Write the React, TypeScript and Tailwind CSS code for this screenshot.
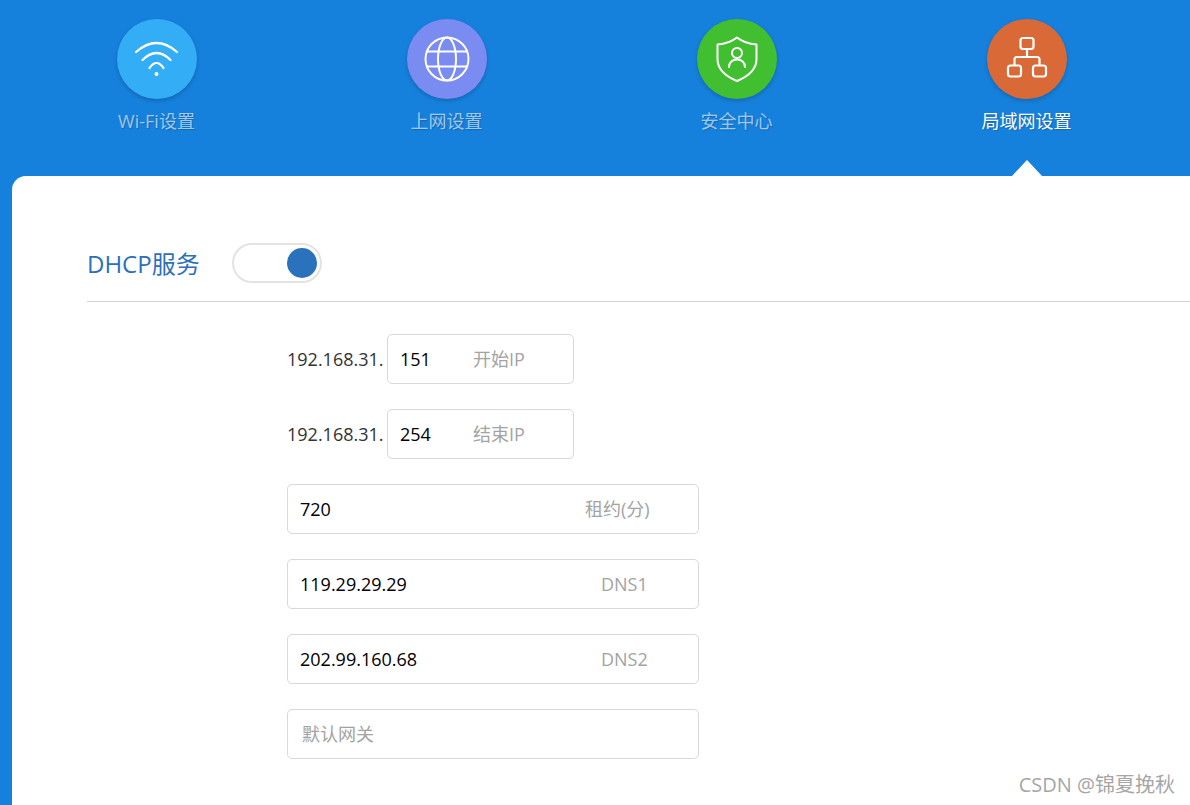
const font = "font-['Open_Sans','Noto_Sans_CJK_SC',sans-serif]";

function WifiIcon() {
  return (
    <svg width="80" height="80" viewBox="0 0 80 80" fill="none" stroke="#fff" strokeWidth="2.2" strokeLinecap="round">
      <path d="M19 33Q39.5 15 60 33" />
      <path d="M25.5 41Q39.5 27 53.5 41" />
      <path d="M32.5 49Q39.5 39 46.5 49" />
      <circle cx="39.5" cy="55" r="2" fill="#fff" stroke="none" />
    </svg>
  );
}

function GlobeIcon() {
  return (
    <svg width="80" height="80" viewBox="0 0 80 80" fill="none" stroke="#fff" strokeWidth="2">
      <circle cx="40" cy="40" r="21.5" />
      <ellipse cx="40" cy="40" rx="9" ry="21.5" />
      <path d="M20 32.5H60M20 47.5H60" />
    </svg>
  );
}

function ShieldIcon() {
  return (
    <svg width="80" height="80" viewBox="0 0 80 80" fill="none" stroke="#fff" strokeWidth="2" strokeLinecap="round" strokeLinejoin="round">
      <path d="M40 18.5C45 22.5 52 25 59.5 25.5V40C59.5 50 51 57.5 40 62C29 57.5 20.5 50 20.5 40V25.5C28 25 35 22.5 40 18.5Z" />
      <circle cx="40" cy="34" r="5" />
      <path d="M32 48C32 43.500 35.500 40.500 40 40.500C44.500 40.500 48 43.500 48 48" />
    </svg>
  );
}

function NetworkIcon() {
  return (
    <svg width="80" height="80" viewBox="0 0 80 80" fill="none" stroke="#fff" strokeWidth="2.2" strokeLinejoin="round">
      <rect x="33.500" y="19" width="13" height="11" rx="2.500" />
      <rect x="21" y="46.500" width="13" height="11" rx="2.500" />
      <rect x="46" y="46.500" width="13" height="11" rx="2.500" />
      <path d="M40 30V38M27.500 46.500V40.500Q27.500 38 30 38H50Q52.500 38 52.500 40.500V46.500" />
    </svg>
  );
}

const navItems = [
  { label: "Wi-Fi设置", circle: "bg-[#33adf5]", icon: <WifiIcon />, active: false },
  { label: "上网设置", circle: "bg-[#7a8bf2]", icon: <GlobeIcon />, active: false },
  { label: "安全中心", circle: "bg-[#41bf31]", icon: <ShieldIcon />, active: false },
  { label: "局域网设置", circle: "bg-[#d96a37]", icon: <NetworkIcon />, active: true },
];

function NavItem({ label, circle, icon, active }: { label: string; circle: string; icon: React.ReactNode; active: boolean }) {
  return (
    <div className="relative flex h-[157px] flex-col items-center">
      <div className={`flex h-20 w-20 items-center justify-center rounded-full shadow-[0_2px_4px_rgba(0,0,0,0.2)] ${circle}`}>{icon}</div>
      <div className={`mt-[9px] text-[18px] leading-[27px] [text-shadow:1px_1px_1px_rgba(0,0,0,0.2)] ${active ? "text-white" : "text-white/60"}`}>
        {label}
      </div>
      {active && (
        <div className="absolute bottom-0 left-1/2 h-0 w-0 -translate-x-1/2 border-x-[15px] border-b-[16px] border-x-transparent border-b-white" />
      )}
    </div>
  );
}

function Field({ value, placeholder, labelClass, wide }: { value?: string; placeholder: string; labelClass?: string; wide?: boolean }) {
  return (
    <div className={`flex h-[50px] items-center rounded-[5px] border border-[#d9d9d9] bg-white text-[18px] ${wide ? "w-[412px]" : "w-[187px]"}`}>
      {value ? (
        <>
          <span className="ml-[12px] text-black">{value}</span>
          <span className={`absolute text-[#a3a3a3] ${labelClass}`}>{placeholder}</span>
        </>
      ) : (
        <span className="ml-[14px] text-[#a3a3a3]">{placeholder}</span>
      )}
    </div>
  );
}

function IpRow({ value, placeholder }: { value: string; placeholder: string }) {
  return (
    <div className="flex items-center">
      <span className="w-[100px] text-[18px] text-[#333]">192.168.31.</span>
      <div className="relative">
        <Field value={value} placeholder={placeholder} labelClass="left-[86px]" />
      </div>
    </div>
  );
}

export default function App() {
  return (
    <div className={`relative h-[805px] w-[1190px] overflow-hidden bg-[#1681dd] ${font}`}>
      <nav className="grid grid-cols-[290px_290px_290px_290px] pl-[11.500px] pt-[19px]">
        {navItems.map((item) => (
          <NavItem key={item.label} {...item} />
        ))}
      </nav>
      <main className="ml-3 h-[629px] rounded-tl-[14px] bg-white pl-[75px] pt-[67px]">
        <div className="flex h-[59px] items-start border-b border-[#d4d4d4]">
          <h2 className="w-[145px] text-[24px] leading-[41px] font-normal text-[#2b70bb]">DHCP服务</h2>
          <div className="flex h-10 w-[90px] items-center justify-end rounded-full border-2 border-[#e3e3e3] bg-white pr-[3px]">
            <div className="h-[30px] w-[30px] rounded-full bg-[#2b72bd]" />
          </div>
        </div>
        <form className="ml-[200px] mt-[32px] flex flex-col gap-[25px]">
          <IpRow value="151" placeholder="开始IP" />
          <IpRow value="254" placeholder="结束IP" />
          <div className="relative">
            <Field wide value="720" placeholder="租约(分)" labelClass="left-[298px]" />
          </div>
          <div className="relative">
            <Field wide value="119.29.29.29" placeholder="DNS1" labelClass="left-[314px]" />
          </div>
          <div className="relative">
            <Field wide value="202.99.160.68" placeholder="DNS2" labelClass="left-[314px]" />
          </div>
          <Field wide placeholder="默认网关" />
        </form>
      </main>
      <div className="absolute bottom-[5px] right-[15px] text-[20px] text-[#a6a6a6]">CSDN @锦夏挽秋</div>
    </div>
  );
}
